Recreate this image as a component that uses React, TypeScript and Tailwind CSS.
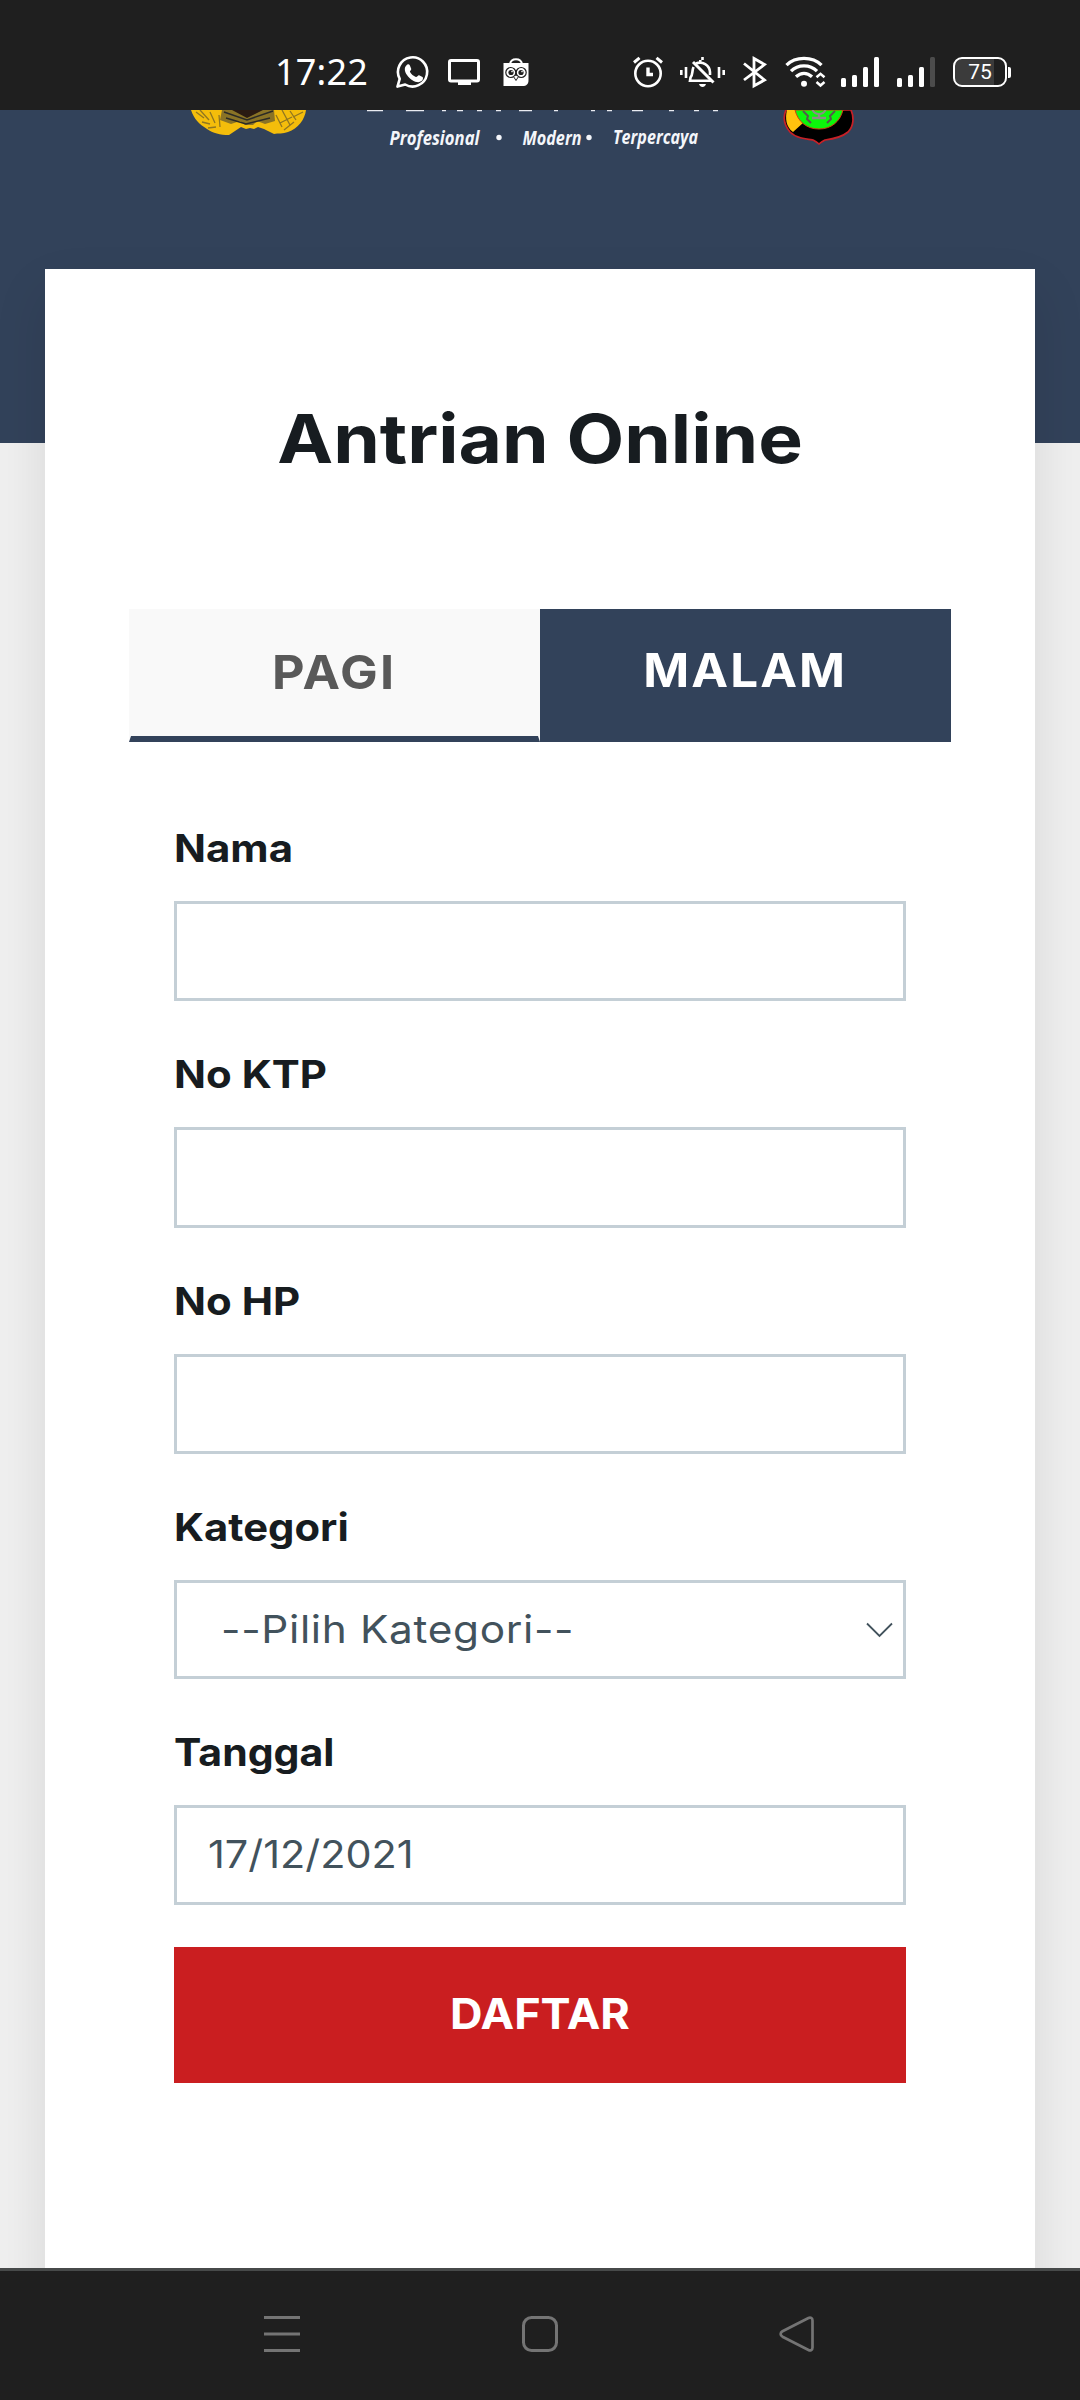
import React from "react";

const statusIcon = "block shrink-0";

function StatusBar() {
  return (
    <header className="flex h-[110px] w-full items-start bg-[#1f1f1f] pl-[275px] pt-[54px] text-white">
      <div className="w-[119px] whitespace-nowrap font-['Noto_Sans'] text-[36px] leading-[36px] tracking-[0.2px]">17:22</div>
      <svg className={statusIcon} width="36" height="36" viewBox="394 54 36 36" fill="none">
        <path d="M397.5 86.6l2.2-7.8a14.6 14.6 0 1 1 5.5 5.7z" stroke="#fff" strokeWidth="2.6" strokeLinejoin="round" />
        <path d="M406.3 65.5c1.2-1.6 2.8-1.6 3.6 0l1.3 3.2c.4 1.3-1.6 2.3-1.3 3.1 1.4 2.6 3.4 4.2 6 5.2 1 .3 2.1-2.1 3.2-1.8l3.4 1.7c1.1.7.3 3.3-1 4.2-2.6 1.9-5.9 1-9.5-1.2-3.7-2.4-7.2-7-7.2-10.7 0-1.600.7-2.900 1.500-3.700z" fill="#fff" />
      </svg>
      <svg className="ml-[16px] block shrink-0" width="36" height="36" viewBox="446 54 36 36" fill="none">
        <rect x="449.5" y="60.5" width="29" height="20.5" rx="1.5" stroke="#fff" strokeWidth="3" />
        <path d="M458 82h13v3h-13z" fill="#fff" />
      </svg>
      <svg className="ml-[18px] block shrink-0" width="32" height="36" viewBox="500 54 32 36" fill="none">
        <path d="M510 64c1-6.5 11-6.5 12 0" stroke="#fff" strokeWidth="2" />
        <path d="M503.5 63h25v17c0 4-2 6-6 6h-19z" fill="#fff" />
        <circle cx="510.8" cy="72.5" r="5" stroke="#1f1f1f" strokeWidth="1.2" />
        <circle cx="521.2" cy="72.5" r="5" stroke="#1f1f1f" strokeWidth="1.2" />
        <circle cx="511" cy="72.5" r="2.6" fill="#1f1f1f" />
        <circle cx="521" cy="72.5" r="2.6" fill="#1f1f1f" />
        <circle cx="512" cy="71.6" r=".8" fill="#fff" />
        <circle cx="522" cy="71.6" r=".8" fill="#fff" />
        <path d="M513.5 76.5l2.5-1.5 2.5 1.5-2.5 4z" fill="#fff" stroke="#1f1f1f" />
      </svg>
      <svg className="ml-[100px] block shrink-0" width="34" height="36" viewBox="632 54 34 36" fill="none" stroke="#fff">
        <circle cx="648" cy="73.5" r="12.7" strokeWidth="2.6" />
        <path d="M648 67.5v7h5" strokeWidth="3.4" />
        <path d="M634 62.5l5.5-4.7M662 62.5l-5.5-4.7" strokeWidth="3" />
      </svg>
      <svg className="ml-[12px] block shrink-0" width="50" height="36" viewBox="678 54 50 36" fill="none" stroke="#fff">
        <path d="M681.3 70v5M686 67v11M719 67v11M723.7 70v5" strokeWidth="2.6" />
        <path d="M696 63.5a10 10 0 0 1 14 8.5v3M693.5 67c-1.700 4-.5 8-3 10.500l-.5 3.200h21.500M700.300 60v2.500M702.500 60v-3" strokeWidth="2.6" />
        <path d="M693 62l20.5 20.5" strokeWidth="3" />
        <path d="M699 84h7c-1 4-6 4-7 0z" fill="#fff" stroke="none" />
      </svg>
      <svg className="ml-[14px] block shrink-0" width="26" height="36" viewBox="742 54 26 36" fill="none" stroke="#fff">
        <path d="M744 63.500l20.500 16.500-10.500 5.800V58.500l10.500 6-20.500 15.500" strokeWidth="2.8" />
      </svg>
      <svg className="ml-[16px] block shrink-0" width="44" height="36" viewBox="784 54 44 36" fill="none" stroke="#fff">
        <path d="M786.500 65.200c9-9 26-9 35 0M791 71.200c7-7 19-7 26 0M796 76.800c5-4.500 11-4.500 16 0" strokeWidth="3.3" />
        <circle cx="804" cy="83.7" r="3" fill="#fff" stroke="none" />
        <path d="M816.500 77.300l4-3.500 4 3.500M816.500 82l4 3.500 4-3.500" strokeWidth="2.5" />
      </svg>
      <svg className="ml-[12px] block shrink-0" width="40" height="36" viewBox="840 54 40 36" fill="#fff">
        <rect x="841" y="78" width="5" height="9" rx="1.5" />
        <rect x="852" y="75" width="5" height="12" rx="1.5" />
        <rect x="863" y="67" width="5" height="20" rx="1.5" />
        <rect x="874" y="57" width="5" height="30" rx="1.5" />
      </svg>
      <svg className="ml-[16px] block shrink-0" width="40" height="36" viewBox="896 54 40 36" fill="#fff">
        <rect x="897" y="78" width="5" height="9" rx="1.5" />
        <rect x="908" y="75" width="5" height="12" rx="1.5" />
        <rect x="919" y="67" width="5" height="20" rx="1.5" />
        <rect x="930" y="57" width="5" height="30" rx="1.5" fill="#4c4c4c" />
      </svg>
      <div className="ml-[17px] mt-[3px] flex items-center">
        <div className="flex h-[30px] w-[54px] items-center justify-center rounded-[9px] border-[2.5px] border-white bg-[linear-gradient(90deg,#3b3b3b_78%,#1f1f1f_78%)] font-['Roboto'] text-[21px] leading-none">75</div>
        <div className="ml-px h-[11px] w-[3px] rounded-r-[2px] bg-white" />
      </div>
    </header>
  );
}

function Banner() {
  return (
    <div className="h-[159px] w-full">
      <svg className="block" width="1080" height="50" viewBox="0 110 1080 50">
        <g>
          <path d="M191 110h115c-1 9-8 19-18 22-5 2-10 1-14 2l-4-2-6-3-6-2-4 2-4-1-4 1-5-2-6 4-6 4c-9 0-16-2-22-6-8-5-13-10-16-19z" fill="#f4bd0b" />
          <path d="M222 110h52l1 11-10 3-8-3-4 4h-8l-5-4-9 3-11-4z" fill="#8a7326" />
          <path d="M232 110h31l-16 8z" fill="#2a1a12" />
          <path d="M224 112l23 8 26-9M226 118l20 6 24-6" fill="none" stroke="#2b2a26" strokeWidth="1.5" />
          <path d="M196 112l8 6M200 110l9 10M202 122l8 2M210 112l5 11M208 128l8-1M219 115l1 12M276 115l6 12M282 110l8 15M290 111l6 9M280 123l12-6M284 130l10-8M293 117l10-5" fill="none" stroke="#907621" strokeWidth="1.3" />
        </g>
        <path d="M367 110.500h16M406 110.500h18M442 110.500h4M457 110.500h6M477 110.500h5M496 110.500h5M519 110.500h13M554 110.500h4M591 110.500h4M607 110.500h5M632 110.500h11M669 110.500h5M694 110.500h5M713 110.500h5" stroke="#e9ecf2" strokeWidth="1.6" />
        <g>
          <path d="M786 110c-3 7-2 15 4 22 6 6 15 7 23 8 2 1 4 2 6 4 2-2 4-3 6-4 8-1 17-3 23-8 6-6 6-15 3-22z" fill="#000" stroke="#c72127" strokeWidth="1.7" />
          <path d="M787 110h10c2 7 5 10 6 13l-10 9c-7-5-8-14-6-22z" fill="#ffc20e" />
          <path d="M795 110c3 12 12 19 24 19s21-7 24-19z" fill="#0bf70b" stroke="#d13a10" />
          <path d="M812 108c1 5 4 6 7 6s6-1 7-6" fill="none" stroke="#8d8a86" strokeWidth="2" />
          <path d="M819 114v4M812 118h14" fill="none" stroke="#8d8a86" strokeWidth="2.5" />
          <path d="M803 111l5 5-1 3 4 4M835 111l-5 5 1 3-4 4" fill="none" stroke="#57584c" strokeWidth="2" />
        </g>
        <g fill="#f4f6fa" fontFamily="Open Sans, sans-serif" fontSize="20" fontWeight="700" fontStyle="italic">
          <text x="389.5" y="145" textLength="90" lengthAdjust="spacingAndGlyphs">Profesional</text>
          <text x="522.5" y="145" textLength="59" lengthAdjust="spacingAndGlyphs">Modern</text>
          <text x="613" y="144" textLength="85" lengthAdjust="spacingAndGlyphs">Terpercaya</text>
        </g>
        <circle cx="499" cy="137.5" r="2.7" fill="#f4f6fa" />
        <circle cx="589" cy="137.5" r="2.7" fill="#f4f6fa" />
      </svg>
    </div>
  );
}

const label = "block h-[106px] origin-left whitespace-nowrap text-[38.5px] font-bold leading-[106px] text-[#171c20]";
const field = "mb-[20px] border-[3px] border-[#c4cfd6] bg-white text-[38.5px] text-[#42525c]";

function QueueForm() {
  return (
    <form className="mx-[129px] flex w-[732px] flex-col pt-[53px]">
      <label className={`${label} scale-x-[1.09]`}>Nama</label>
      <div className={`${field} h-[100px]`} />
      <label className={`${label} scale-x-[1.09]`}>No KTP</label>
      <div className={`${field} h-[101px]`} />
      <label className={`${label} scale-x-[1.09]`}>No HP</label>
      <div className={`${field} h-[100px]`} />
      <label className={`${label} scale-x-[1.085]`}>Kategori</label>
      <div className={`${field} flex h-[99px] items-center justify-between pl-[44px] pr-[10px]`}>
        <span className="origin-left scale-x-[1.1] whitespace-nowrap tracking-[0.6px]">--Pilih Kategori--</span>
        <svg width="27" height="16" viewBox="0 0 27 16" fill="none" stroke="#42525c" strokeWidth="1.8">
          <path d="M1 1.500l12.500 12.500L26 1.500" />
        </svg>
      </div>
      <label className={`${label} scale-x-[1.065]`}>Tanggal</label>
      <div className={`${field} flex h-[100px] items-center pl-[31px]`}>
        <span className="origin-left scale-x-[1.075] whitespace-nowrap">17/12/2021</span>
      </div>
      <button type="button" className="mt-[22px] block h-[136px] w-full bg-[#ca1e20] pb-[3px] text-[42.5px] font-bold text-white">
        <span className="inline-block scale-x-[1.06]">DAFTAR</span>
      </button>
    </form>
  );
}

function NavigationBar() {
  return (
    <nav className="relative flex h-[132px] w-full items-start justify-between border-t-[3px] border-[#474a4a] bg-[#1f1f1f] px-[262px] pt-[43px]">
      <svg width="40" height="40" viewBox="0 0 40 40" stroke="#747474" strokeWidth="3">
        <path d="M2 3.500h36M2 20h36M2 36.500h36" />
      </svg>
      <svg width="40" height="40" viewBox="0 0 40 40" fill="none" stroke="#747474" strokeWidth="3">
        <rect x="3.5" y="3.5" width="33" height="33" rx="8" />
      </svg>
      <svg width="40" height="40" viewBox="0 0 40 40" fill="none" stroke="#747474" strokeWidth="2.7" strokeLinejoin="round">
        <path d="M4.500 17.300L30.500 4c2-1 4 0 4 2.500v27c0 2.500-2 3.500-4 2.500L4.500 22.700c-2.500-1.500-2.500-4 0-5.400z" />
      </svg>
    </nav>
  );
}

export default function App() {
  return (
    <div className="flex h-[2400px] w-[1080px] flex-col overflow-hidden bg-[#efefef] font-['Inter',sans-serif]">
      <StatusBar />
      <main className="h-[2158px] overflow-hidden bg-[linear-gradient(#32425a_333px,#efefef_333px)]">
        <Banner />
        <section className="mx-[45px] h-[2100px] w-[990px] bg-white shadow-[0_24px_50px_rgba(0,0,0,0.1)]">
          <h1 className="h-[340px] scale-x-[1.11] text-center text-[67.5px] font-bold leading-[340px] text-[#171c20]">Antrian Online</h1>
          <div className="mx-[84px] flex h-[133px] w-[822px]">
            <div className="flex w-[411px] items-center justify-center border-x-2 border-b-[6px] border-x-transparent border-b-[#32425a] bg-[#f9f9f9] text-[47px] font-bold tracking-[2px] text-[#595959]">
              <span className="scale-x-[1.07]">PAGI</span>
            </div>
            <div className="flex w-[411px] items-center justify-center bg-[#32425a] pb-[11px] text-[47px] font-bold tracking-[2px] text-white">
              <span className="scale-x-[1.05]">MALAM</span>
            </div>
          </div>
          <QueueForm />
        </section>
      </main>
      <NavigationBar />
    </div>
  );
}
